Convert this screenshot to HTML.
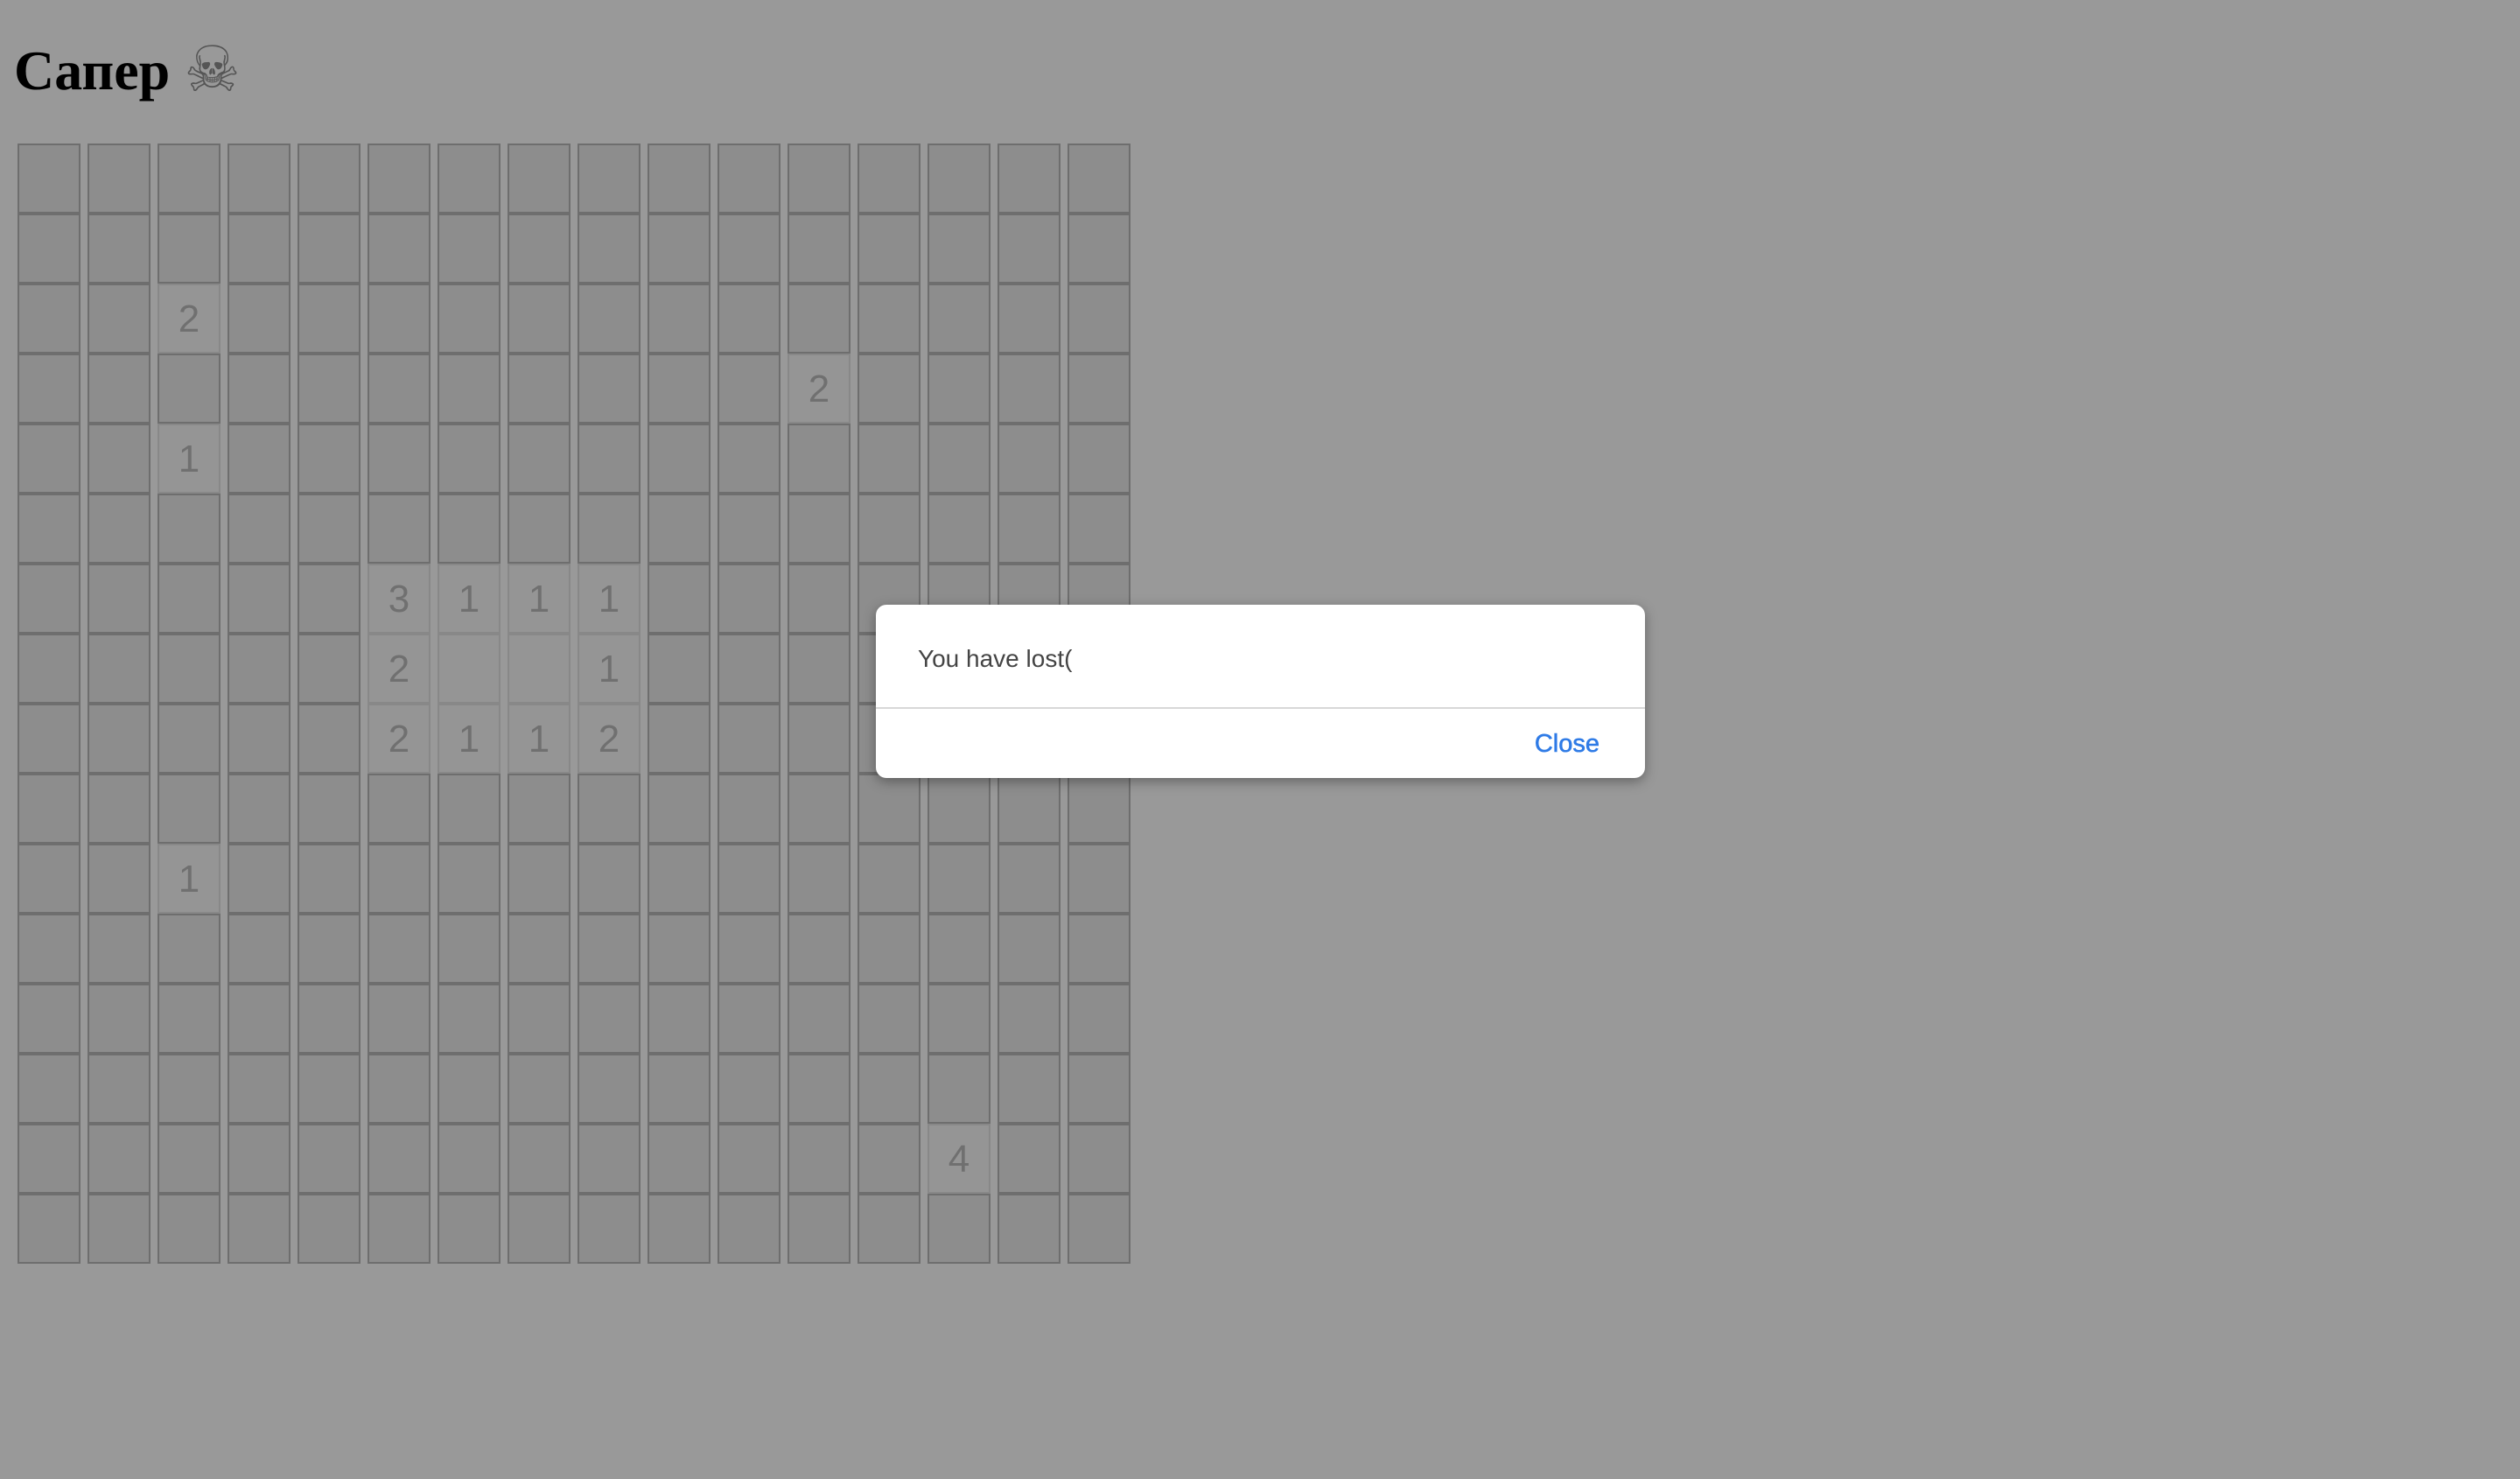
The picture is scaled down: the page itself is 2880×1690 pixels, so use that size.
<!DOCTYPE html>
<html><head><meta charset="utf-8"><style>
html,body{margin:0;padding:0;width:2880px;height:1690px;background:#999;overflow:hidden;position:relative}
h1{position:absolute;left:16px;top:38px;margin:0;font:bold 64px "Liberation Serif",serif;color:#000;line-height:80px}
.col{position:absolute;top:164px;width:68px;height:1280px;border-left:2px solid #6e6e6e;border-right:2px solid #6e6e6e;
background:repeating-linear-gradient(#6e6e6e 0 2px,#8d8d8d 2px 78px,#6e6e6e 78px 80px)}
.o{position:absolute;width:68px;height:76px;border:2px solid #888;background:#959595;color:#707070;
font:44px "Liberation Sans",sans-serif;text-align:center;line-height:78px}
.dlg{position:absolute;left:1001px;top:691px;width:879px;height:198px;background:#fff;border-radius:12px;box-shadow:0 4px 14px rgba(0,0,0,.35)}
.msg{position:absolute;left:48px;top:46px;font:28px "Liberation Sans",sans-serif;color:#444}
.div{position:absolute;left:0;right:0;top:117px;height:2px;background:#d8d8d8}
.cl{position:absolute;right:52px;top:143px;font:29px "Liberation Sans",sans-serif;color:#2f7be6;-webkit-text-stroke:0.6px #2f7be6}
</style></head><body>
<h1>Сапер <span style="font-size:72px;font-weight:normal;color:#555;position:relative;top:2px">☠</span></h1>
<div class="col" style="left:20px"></div><div class="col" style="left:100px"></div><div class="col" style="left:180px"></div><div class="col" style="left:260px"></div>
<div class="col" style="left:340px"></div><div class="col" style="left:420px"></div><div class="col" style="left:500px"></div><div class="col" style="left:580px"></div>
<div class="col" style="left:660px"></div><div class="col" style="left:740px"></div><div class="col" style="left:820px"></div><div class="col" style="left:900px"></div>
<div class="col" style="left:980px"></div><div class="col" style="left:1060px"></div><div class="col" style="left:1140px"></div><div class="col" style="left:1220px"></div>
<div class="o" style="left:180px;top:324px">2</div>
<div class="o" style="left:900px;top:404px">2</div>
<div class="o" style="left:180px;top:484px">1</div>
<div class="o" style="left:420px;top:644px">3</div>
<div class="o" style="left:500px;top:644px">1</div>
<div class="o" style="left:580px;top:644px">1</div>
<div class="o" style="left:660px;top:644px">1</div>
<div class="o" style="left:420px;top:724px">2</div>
<div class="o" style="left:500px;top:724px"></div>
<div class="o" style="left:580px;top:724px"></div>
<div class="o" style="left:660px;top:724px">1</div>
<div class="o" style="left:420px;top:804px">2</div>
<div class="o" style="left:500px;top:804px">1</div>
<div class="o" style="left:580px;top:804px">1</div>
<div class="o" style="left:660px;top:804px">2</div>
<div class="o" style="left:180px;top:964px">1</div>
<div class="o" style="left:1060px;top:1284px">4</div>
<div class="dlg"><div class="msg">You have lost(</div><div class="div"></div><div class="cl">Close</div></div>
</body></html>
